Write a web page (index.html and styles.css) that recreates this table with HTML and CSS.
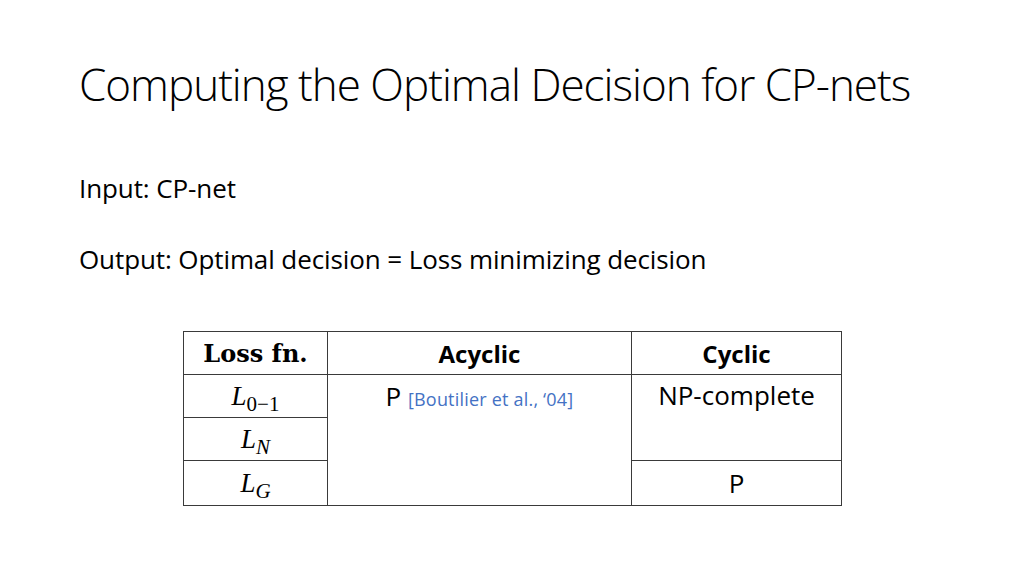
FILE: index.html
```html
<!DOCTYPE html>
<html>
<head>
<meta charset="utf-8">
<link rel="stylesheet" href="styles.css">
</head>
<body>
<div class="slide">
  <h1 class="title">Computing the Optimal Decision for CP-nets</h1>
  <p class="line input">Input: CP-net</p>
  <p class="line output">Output: Optimal decision = Loss minimizing decision</p>
  <table class="grid">
    <tr class="head">
      <td class="c1 mathb">Loss fn.</td>
      <td class="c2 hb">Acyclic</td>
      <td class="c3 hb">Cyclic</td>
    </tr>
    <tr>
      <td class="c1 math"><i>L</i><sub>0−1</sub></td>
      <td class="c2 top" rowspan="3">P <span class="cite">[Boutilier et al., ‘04]</span></td>
      <td class="c3 top" rowspan="2">NP-complete</td>
    </tr>
    <tr>
      <td class="c1 math"><i>L</i><sub><i>N</i></sub></td>
    </tr>
    <tr>
      <td class="c1 math"><i>L</i><sub><i>G</i></sub></td>
      <td class="c3 top last">P</td>
    </tr>
  </table>
</div>
</body>
</html>
```

FILE: styles.css
```css
html, body {
  margin: 0;
  padding: 0;
  background: #ffffff;
}
.slide {
  width: 1024px;
  height: 576px;
  overflow: hidden;
  font-family: "Open Sans", "Liberation Sans", sans-serif;
  color: #000;
}
.title {
  margin: 0;
  padding: 56px 0 0 79px;
  font-size: 44px;
  font-weight: 300;
  letter-spacing: -1px;
  line-height: 56px;
  color: #000;
}
.line {
  margin: 0 0 0 79px;
  font-size: 26px;
  letter-spacing: -0.1px;
  line-height: 32px;
}
.input { margin-top: 60px; }
.output { margin-top: 39px; }
.grid {
  margin: 56px 0 0 183px;
  border-collapse: collapse;
}
.grid td {
  border: 1px solid #3a3a3a;
  padding: 0;
  text-align: center;
  height: 42px;
}
.c1 { width: 143px; }
.c2 { width: 303px; }
.c3 { width: 209px; }
.head td { height: 42px; }
.hb {
  font-weight: 700;
  font-size: 24px;
}
.mathb {
  font-family: "DejaVu Serif", "Liberation Serif", serif;
  font-weight: 700;
  font-size: 24px;
}
.math {
  font-family: "Liberation Serif", "DejaVu Serif", serif;
  font-size: 27px;
  line-height: 30px;
}
.math sub {
  font-size: 21px;
  vertical-align: -6px;
  line-height: 0;
}
.top {
  vertical-align: top;
  font-size: 26px;
  line-height: 41px;
}
.top.c2 { line-height: 43px; }
.top.last { line-height: 44px; }
.cite {
  color: #4472c4;
  font-size: 18px;
  letter-spacing: 0.2px;
}
```
